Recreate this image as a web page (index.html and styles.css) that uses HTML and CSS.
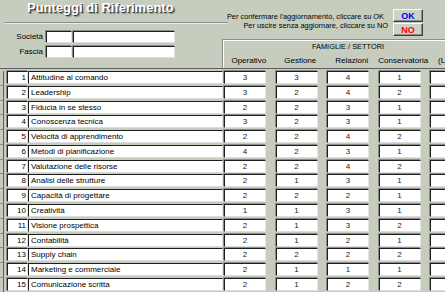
FILE: index.html
```html
<!DOCTYPE html>
<html lang="it">
<head>
  <meta charset="UTF-8">
  <title>Punteggi di Riferimento</title>
  <link rel="stylesheet" href="styles.css">
</head>
<body>
  <div class="form">
    <div class="head">
      <div class="head-left">
        <h1 class="title">Punteggi di Riferimento</h1>
        <div class="rule"></div>
        <div class="field-row">
          <label>Società</label>
          <span class="box f-code"></span>
          <span class="box f-name"></span>
        </div>
        <div class="field-row">
          <label>Fascia</label>
          <span class="box f-code"></span>
          <span class="box f-name"></span>
        </div>
      </div>

      <div class="head-right">
        <div class="confirm">
          <div class="msg">
            <p class="msg-ok">Per confermare l'aggiornamento, cliccare su OK</p>
            <p class="msg-no">Per uscire senza aggiornare, cliccare su NO</p>
          </div>
          <div class="buttons">
            <button class="btn btn-ok">OK</button>
            <button class="btn btn-no">NO</button>
          </div>
        </div>
        <div class="group">
          <div class="group-title">FAMIGLIE / SETTORI</div>
          <div class="group-cols">
            <span>Operativo</span>
            <span>Gestione</span>
            <span>Relazioni</span>
            <span>Conservatoria</span>
            <span class="col-more">(Livello)</span>
          </div>
        </div>
      </div>
    </div>

    <div class="rows">
      <div class="row"><span class="sel"></span><span class="box num">1</span><span class="box name">Attitudine al comando</span><span class="cell"><span class="box val">3</span></span><span class="cell"><span class="box val">3</span></span><span class="cell"><span class="box val">4</span></span><span class="cell"><span class="box val">1</span></span><span class="cell"><span class="box val"></span></span></div>
      <div class="row"><span class="sel"></span><span class="box num">2</span><span class="box name">Leadership</span><span class="cell"><span class="box val">3</span></span><span class="cell"><span class="box val">2</span></span><span class="cell"><span class="box val">4</span></span><span class="cell"><span class="box val">2</span></span><span class="cell"><span class="box val"></span></span></div>
      <div class="row"><span class="sel"></span><span class="box num">3</span><span class="box name">Fiducia in se stesso</span><span class="cell"><span class="box val">2</span></span><span class="cell"><span class="box val">2</span></span><span class="cell"><span class="box val">3</span></span><span class="cell"><span class="box val">1</span></span><span class="cell"><span class="box val"></span></span></div>
      <div class="row"><span class="sel"></span><span class="box num">4</span><span class="box name">Conoscenza tecnica</span><span class="cell"><span class="box val">3</span></span><span class="cell"><span class="box val">2</span></span><span class="cell"><span class="box val">3</span></span><span class="cell"><span class="box val">1</span></span><span class="cell"><span class="box val"></span></span></div>
      <div class="row"><span class="sel"></span><span class="box num">5</span><span class="box name">Velocità di apprendimento</span><span class="cell"><span class="box val">2</span></span><span class="cell"><span class="box val">2</span></span><span class="cell"><span class="box val">4</span></span><span class="cell"><span class="box val">2</span></span><span class="cell"><span class="box val"></span></span></div>
      <div class="row"><span class="sel"></span><span class="box num">6</span><span class="box name">Metodi di pianificazione</span><span class="cell"><span class="box val">4</span></span><span class="cell"><span class="box val">2</span></span><span class="cell"><span class="box val">3</span></span><span class="cell"><span class="box val">1</span></span><span class="cell"><span class="box val"></span></span></div>
      <div class="row"><span class="sel"></span><span class="box num">7</span><span class="box name">Valutazione delle risorse</span><span class="cell"><span class="box val">2</span></span><span class="cell"><span class="box val">2</span></span><span class="cell"><span class="box val">4</span></span><span class="cell"><span class="box val">2</span></span><span class="cell"><span class="box val"></span></span></div>
      <div class="row"><span class="sel"></span><span class="box num">8</span><span class="box name">Analisi delle strutture</span><span class="cell"><span class="box val">2</span></span><span class="cell"><span class="box val">1</span></span><span class="cell"><span class="box val">3</span></span><span class="cell"><span class="box val">1</span></span><span class="cell"><span class="box val"></span></span></div>
      <div class="row"><span class="sel"></span><span class="box num">9</span><span class="box name">Capacità di progettare</span><span class="cell"><span class="box val">2</span></span><span class="cell"><span class="box val">2</span></span><span class="cell"><span class="box val">2</span></span><span class="cell"><span class="box val">1</span></span><span class="cell"><span class="box val"></span></span></div>
      <div class="row"><span class="sel"></span><span class="box num">10</span><span class="box name">Creatività</span><span class="cell"><span class="box val">1</span></span><span class="cell"><span class="box val">1</span></span><span class="cell"><span class="box val">3</span></span><span class="cell"><span class="box val">1</span></span><span class="cell"><span class="box val"></span></span></div>
      <div class="row"><span class="sel"></span><span class="box num">11</span><span class="box name">Visione prospettica</span><span class="cell"><span class="box val">2</span></span><span class="cell"><span class="box val">1</span></span><span class="cell"><span class="box val">3</span></span><span class="cell"><span class="box val">2</span></span><span class="cell"><span class="box val"></span></span></div>
      <div class="row"><span class="sel"></span><span class="box num">12</span><span class="box name">Contabilità</span><span class="cell"><span class="box val">2</span></span><span class="cell"><span class="box val">1</span></span><span class="cell"><span class="box val">2</span></span><span class="cell"><span class="box val">1</span></span><span class="cell"><span class="box val"></span></span></div>
      <div class="row"><span class="sel"></span><span class="box num">13</span><span class="box name">Supply chain</span><span class="cell"><span class="box val">2</span></span><span class="cell"><span class="box val">2</span></span><span class="cell"><span class="box val">2</span></span><span class="cell"><span class="box val">2</span></span><span class="cell"><span class="box val"></span></span></div>
      <div class="row"><span class="sel"></span><span class="box num">14</span><span class="box name">Marketing e commerciale</span><span class="cell"><span class="box val">2</span></span><span class="cell"><span class="box val">1</span></span><span class="cell"><span class="box val">1</span></span><span class="cell"><span class="box val">1</span></span><span class="cell"><span class="box val"></span></span></div>
      <div class="row"><span class="sel"></span><span class="box num">15</span><span class="box name">Comunicazione scritta</span><span class="cell"><span class="box val">2</span></span><span class="cell"><span class="box val">1</span></span><span class="cell"><span class="box val">2</span></span><span class="cell"><span class="box val">2</span></span><span class="cell"><span class="box val"></span></span></div>
    </div>
  </div>
</body>
</html>
```

FILE: styles.css
```css
body {
  margin: 0;
  background: #c6cdbf;
  font-family: "Liberation Sans", Arial, sans-serif;
  font-size: 8px;
  color: #000;
  overflow: hidden;
}

.form {
  width: 445px;
  height: 292px;
  overflow: hidden;
}

/* header */

.head {
  display: flex;
  height: 68px;
}

.head-left {
  width: 222px;
  flex-shrink: 0;
}

.title {
  margin: 0 0 6px 27px;
  font-size: 13px;
  line-height: 16px;
  font-weight: bold;
  color: #fff;
  text-shadow: 1px 1px 0 #3c3c3c, 2px 2px 1px #8a8a8a;
  white-space: nowrap;
}

.rule {
  margin: 0 -6px 7px 5px;
  border-top: 1px solid #8c8c8c;
  border-bottom: 1px solid #e6eae0;
}

.field-row {
  display: flex;
  align-items: center;
  height: 12px;
  margin-bottom: 3px;
}

.field-row label {
  width: 43px;
  padding-right: 3px;
  text-align: right;
  line-height: 12px;
}

.f-code {
  width: 26px;
  height: 12px;
  margin-right: 1px;
}

.f-name {
  width: 102px;
  height: 12px;
}

.head-right {
  flex: 1;
  min-width: 0;
  display: flex;
  flex-direction: column;
}

.confirm {
  display: flex;
  height: 39px;
}

.msg {
  flex: 1;
  min-width: 0;
  padding-top: 12px;
  text-align: right;
  white-space: nowrap;
  font-size: 7.4px;
}

.msg p {
  margin: 0;
  line-height: 9px;
}

.msg-ok {
  padding-right: 4px;
}

.buttons {
  flex-shrink: 0;
  display: flex;
  flex-direction: column;
  gap: 1px;
  padding-top: 9px;
  margin: 0 22px 0 5px;
}

.btn {
  width: 30px;
  height: 13px;
  padding: 0;
  background: #ccd2c6;
  border: 1px solid;
  border-color: #fff #404040 #404040 #fff;
  box-shadow: inset -1px -1px 0 #8a8a8a;
  font-family: "Liberation Sans", Arial, sans-serif;
  font-size: 9px;
  font-weight: bold;
  line-height: 10px;
}

.btn-ok {
  color: #0000ff;
}

.btn-no {
  color: #ff0000;
}

.group {
  width: 260px;
  height: 29px;
  box-sizing: border-box;
  border-top: 1px solid #8c8c8c;
  border-left: 1px solid #8c8c8c;
  box-shadow: inset 1px 1px 0 #fff;
}

.group-title {
  padding-top: 2px;
  line-height: 10px;
  width: 250px;
  text-align: center;
  font-size: 7.4px;
}

.group-cols {
  display: flex;
  padding-top: 4px;
  line-height: 10px;
  white-space: nowrap;
}

.group-cols span {
  width: 51.5px;
  flex-shrink: 0;
  text-align: center;
}

.group-cols .col-more {
  text-align: left;
  padding-left: 9px;
}

/* rows */

.rows {
  border-top: 1px solid #5e5e5e;
  padding-top: 2px;
}

.row {
  display: flex;
  align-items: flex-start;
  height: 14.79px;
  white-space: nowrap;
}

.row > * {
  flex-shrink: 0;
}

.sel {
  width: 3px;
  height: 100%;
  margin-right: 3px;
  border-right: 1px solid #5e5e5e;
  box-shadow: inset 0 -1px 0 #8c8c8c;
}

.box {
  display: block;
  box-sizing: border-box;
  background: #fff;
  border: 1px solid;
  border-color: #1e1e1e #e4e4e4 #dcdcdc #1e1e1e;
  box-shadow: -1px -1px 0 #8c8c8c;
}

.num,
.name,
.val {
  height: 13px;
  line-height: 11px;
  overflow: hidden;
}

.num {
  width: 21px;
  padding-right: 1px;
  text-align: right;
}

.name {
  width: 195px;
  padding-left: 2px;
  box-shadow: none;
}

.cell {
  width: 51.5px;
}

.val {
  width: 42px;
  margin-left: 1px;
  text-align: center;
  color: #222;
}
```
